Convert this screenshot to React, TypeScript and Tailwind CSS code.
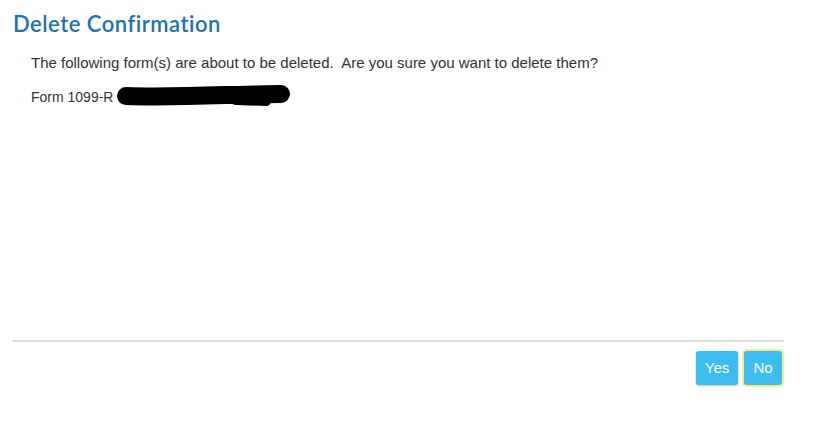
export default function App() {
  return (
    <div className="w-[825px] h-[424px] bg-white" style={{ fontFamily: 'Arial, "Liberation Sans", sans-serif' }}>
      <div className="w-[784px] flex flex-col h-full">
        <h1 className="pl-[13px] pt-[10px] text-[22px] leading-[28px] font-semibold text-[#1a73b0] tracking-[0.5px]" style={{ fontFamily: '"Lato", "Open Sans", sans-serif' }}>
          Delete Confirmation
        </h1>
        <div className="pl-[31px] pt-[16px] text-[14px] text-[#333]" style={{ fontFamily: '"Liberation Sans", Arial, sans-serif' }}>
          <p className="leading-[17px] text-[15px]">The following form(s) are about to be deleted.&nbsp; Are you sure you want to delete them?</p>
          <div className="mt-[15px] flex items-center h-[22px]">
            <span>Form 1099-R</span>
            <svg width="178" height="24" viewBox="0 0 178 24" className="ml-[3px]">
              <path d="M10 11 C 40 12, 80 11, 110 10 C 130 10, 150 9, 165 9" stroke="#000" strokeWidth="18" strokeLinecap="round" fill="none" />
              <path d="M120 15 L 150 16" stroke="#000" strokeWidth="10" strokeLinecap="round" fill="none" />
            </svg>
          </div>
        </div>
        <div className="flex-1" />
        <div className="ml-[12px] h-[2px] bg-[#dcdcdc]" />
        <div className="flex justify-end gap-[6px] pt-[9px] pr-[2px] h-[82px]">
          <button className="w-[42px] h-[34px] rounded-[3px] bg-[#3cbdf0] text-white text-[15px] shadow-[0_1px_2px_rgba(0,0,0,0.25)]" style={{ fontFamily: '"Liberation Sans", Arial, sans-serif' }}>
            Yes
          </button>
          <button className="w-[38px] h-[34px] rounded-[3px] bg-[#3cbdf0] text-white text-[15px] ring-2 ring-[#f7ee7a]" style={{ fontFamily: '"Liberation Sans", Arial, sans-serif' }}>
            No
          </button>
        </div>
      </div>
    </div>
  )
}
